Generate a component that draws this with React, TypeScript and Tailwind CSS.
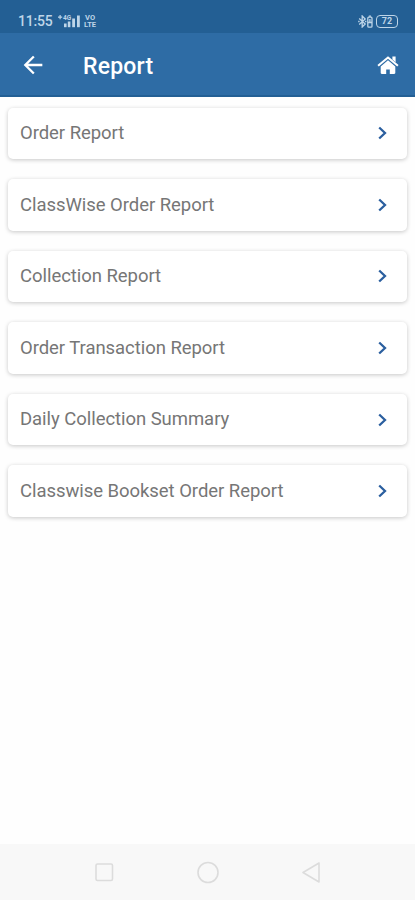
import { MdArrowBack } from "react-icons/md";

const reports = [
  "Order Report",
  "ClassWise Order Report",
  "Collection Report",
  "Order Transaction Report",
  "Daily Collection Summary",
  "Classwise Bookset Order Report",
];

const SignalIcon = () => (
  <svg width="24" height="14" viewBox="0 0 24 14" fill="currentColor">
    <path d="M1 2.6h1.5V1h1.2v1.6h1.5v1.2H3.7v1.5H2.5V3.8H1z" />
    <rect x="7" y="9.5" width="2.6" height="3.7" />
    <rect x="10.8" y="7.5" width="2.6" height="5.7" />
    <rect x="15.2" y="4.5" width="2.8" height="8.7" />
    <rect x="20" y="1.5" width="2.8" height="11.7" />
    <text x="6" y="6" fontSize="6.5" fontWeight="700" fontFamily="Roboto, sans-serif">
      4G
    </text>
  </svg>
);

const BluetoothIcon = () => (
  <svg width="15" height="13" viewBox="0 0 15 13" fill="none" stroke="currentColor" strokeWidth="1.3">
    <path d="M1.2 3.5l6 5.5-3 3V1l3 3-6 5.5" />
    <path d="M0.2 6.5h1.4M7 6.5h1.4" />
    <rect x="9.8" y="2.2" width="4.2" height="10" rx="1" />
    <path d="M10.8 1.2h2.2M9.8 7.5h4.2M11.9 4v4" />
  </svg>
);

const HomeIcon = () => (
  <svg width="22" height="20" viewBox="0 0 22 20" fill="currentColor">
    <path d="M11 5.3L3.7 11.4V17.8c0 .7.4 1.2 1.1 1.2h4.4v-4.6h3.6V19h4.4c.7 0 1.1-.5 1.1-1.2v-6.4z" />
    <path d="M15.4 1.6h3.2v5.6l-3.2-2.6z" />
    <path d="M1.1 10.8L11 2.5l9.9 8.3" fill="none" stroke="currentColor" strokeWidth="2.1" />
  </svg>
);

const StatusBar = () => (
  <div className="flex h-[33px] items-center justify-between bg-[#235f94] pl-[18px] pr-[17px] pt-[9px] text-[#bed5e8]">
    <div className="flex items-center">
      <span className="w-[39px] text-[14px] font-medium leading-4 tracking-[-0.2px]">11:55</span>
      <SignalIcon />
      <div className="ml-[3px] flex flex-col items-center text-[7.5px] font-bold leading-[7.5px]">
        <span>VO</span>
        <span>LTE</span>
      </div>
    </div>
    <div className="flex items-center gap-[3px]">
      <BluetoothIcon />
      <div className="flex h-[13px] w-[22px] items-center justify-center rounded-[4px] border-[1.5px] border-current text-[9px] font-bold leading-none">
        72
      </div>
    </div>
  </div>
);

const ReportCard = ({ title }: { title: string }) => (
  <button className="flex h-[51.6px] w-full items-center justify-between rounded-[5px] bg-white pl-3 pr-[19px] shadow-[0_1px_4px_rgba(0,0,0,0.22)]">
    <span className="pt-[1px] text-[18.5px] tracking-[-0.05px] text-[#767676]">{title}</span>
    <svg width="11" height="14" viewBox="0 0 11 14" fill="none" stroke="#2b5f9f" strokeWidth="2.3">
      <path d="M2.2 1.5L8 7l-5.8 5.5" />
    </svg>
  </button>
);

const App = () => {
  return (
    <div className="flex h-[900px] w-[415px] flex-col bg-[#fefefe] font-[Roboto,sans-serif]">
      <StatusBar />
      <header className="flex h-16 items-center border-b-2 border-[#235f94] bg-[#2e6ca5] pl-[19px] pr-[16.5px] pt-[2px] text-white">
        <MdArrowBack size={28} />
        <h1 className="ml-[36px] mt-[4px] text-[23px] font-medium tracking-[0.2px]">Report</h1>
        <div className="ml-auto">
          <HomeIcon />
        </div>
      </header>
      <main className="flex flex-1 flex-col gap-5 px-2 pt-[10.5px]">
        {reports.map((title) => (
          <ReportCard key={title} title={title} />
        ))}
      </main>
      <nav className="flex h-14 items-center bg-[#f8f8f8] px-[94px] text-[#dcdcdc]">
        <svg width="20" height="24" viewBox="0 0 20 24" fill="none" stroke="currentColor" strokeWidth="1.6">
          <rect x="2" y="4" width="16.5" height="16.5" rx="1.5" />
        </svg>
        <svg className="mx-auto" width="24" height="24" viewBox="0 0 24 24" fill="none" stroke="currentColor" strokeWidth="1.6">
          <circle cx="12" cy="12.5" r="10" />
        </svg>
        <svg width="20" height="24" viewBox="0 0 20 24" fill="none" stroke="currentColor" strokeWidth="1.6" strokeLinejoin="round">
          <path d="M18 3v19L2 12.5z" />
        </svg>
      </nav>
    </div>
  );
};

export default App;
